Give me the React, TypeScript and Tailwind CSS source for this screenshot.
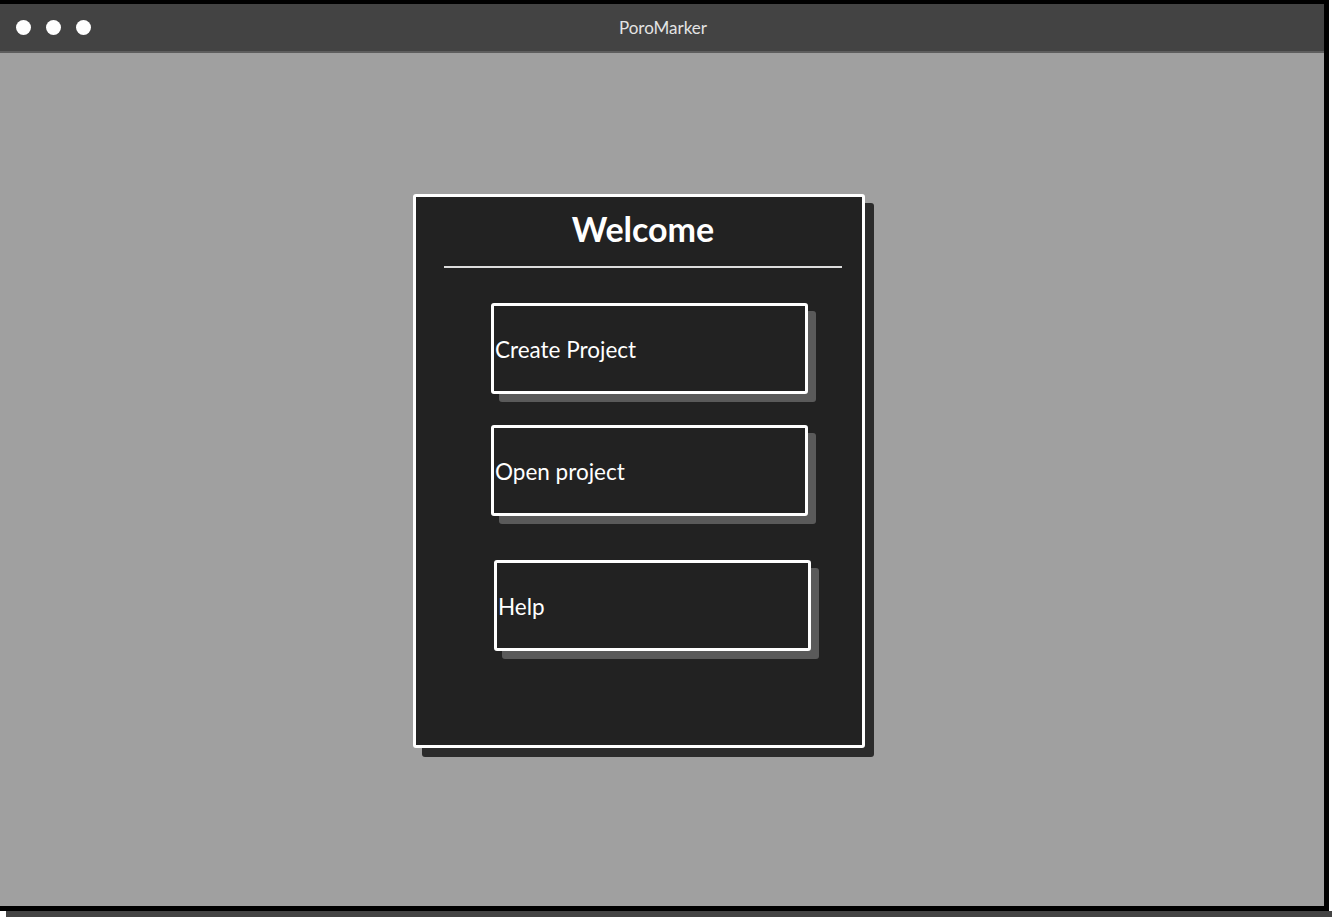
const menu = [
  { label: 'Create Project', shift: false, gap: 'mt-[35px]' },
  { label: 'Open project', shift: false, gap: 'mt-[31px]' },
  { label: 'Help', shift: true, gap: 'mt-[44px]' },
]

export default function App() {
  return (
    <div className="w-[1332px] h-[917px] bg-white overflow-hidden font-['Lato','Noto_Sans',sans-serif]">
      {/* Window */}
      <div className="w-[1329px] h-[911px] flex flex-col border-t-4 border-r-[5px] border-b-[5px] border-black">
        {/* Title bar */}
        <div className="relative h-[49px] shrink-0 bg-[#434343] border-b-2 border-[#5e5e5e] flex items-center pl-[16px]">
          <div className="flex gap-[15px]">
            <span className="w-[15px] h-[15px] rounded-full bg-white" />
            <span className="w-[15px] h-[15px] rounded-full bg-white" />
            <span className="w-[15px] h-[15px] rounded-full bg-white" />
          </div>
          <p className="absolute left-0 right-0 text-center text-[17px] text-[#e4e4e4] pl-[2px]">
            PoroMarker
          </p>
        </div>

        {/* Body */}
        <div className="flex-1 bg-[#a0a0a0] pt-[141px] pl-[413px]">
          <div className="w-[452px] h-[554px] bg-[#222222] border-[3px] border-white rounded-[3px] shadow-[9px_9px_0_#2b2b2b] flex flex-col">
            <div className="ml-[28px] mr-[20px] pt-[12px]">
              <h1 className="text-center text-[34px] leading-[1.2] font-bold text-white">
                Welcome
              </h1>
              <div className="mt-[16px] h-[2px] bg-[#dcdcdc]" />
            </div>

            <div className="flex flex-col pl-[75px]">
              {menu.map((m) => (
                <button
                  key={m.label}
                  className={`${m.gap} ${m.shift ? 'ml-[3px]' : ''} w-[317px] h-[91px] shrink-0 bg-[#222222] border-[3px] border-white rounded-[3px] shadow-[8px_8px_0_#5a5a5a] flex items-center pl-px pt-[3px] text-left text-[22.5px] text-white`}
                >
                  {m.label}
                </button>
              ))}
            </div>
          </div>
        </div>
      </div>
      <div className="ml-[6px] h-[6px] bg-[#444444]" />
    </div>
  )
}
